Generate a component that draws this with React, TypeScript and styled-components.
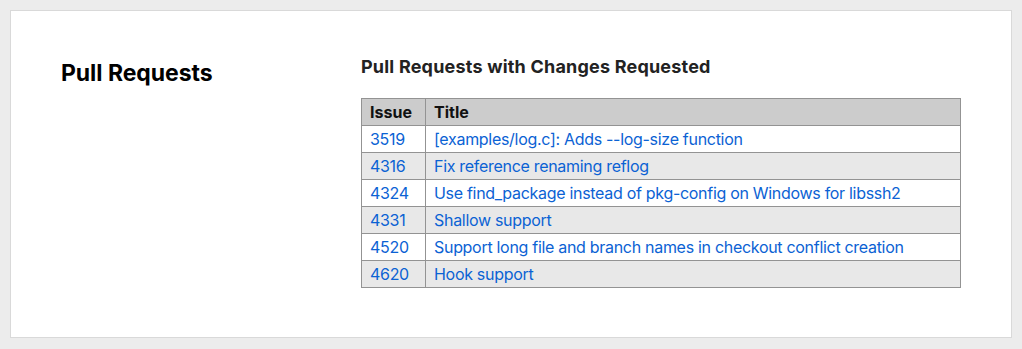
import { FC } from "react";
import styled, { createGlobalStyle } from "styled-components";

const GlobalStyle = createGlobalStyle`
  html, body {
    margin: 0;
    padding: 0;
    background: #ececec;
    font-family: Inter, "Noto Sans", sans-serif;
  }
`;

const Page = styled.div`
  padding: 10px;
  width: 1002px;
`;

const Panel = styled.section`
  display: grid;
  grid-template-columns: 300px 1fr;
  height: 326px;
  background: #fff;
  border: 1px solid #d9d9d9;
  padding-left: 50px;
`;

const SideTitle = styled.h1`
  margin: 0;
  padding-top: 48px;
  font-size: 23px;
  line-height: 28px;
  font-weight: 700;
  color: #000;
  letter-spacing: -0.05px;
`;

const Content = styled.div`
  display: flex;
  flex-direction: column;
  padding-top: 45px;
`;

const SectionTitle = styled.h2`
  margin: 0 0 20px;
  font-size: 18px;
  line-height: 22px;
  font-weight: 700;
  color: #222;
  letter-spacing: 0.2px;
`;

const Table = styled.table`
  border-collapse: collapse;
  width: 600px;
  font-size: 16px;
`;

const HeadCell = styled.th<{ $narrow?: boolean }>`
  background: #cccccc;
  border: 1px solid #939393;
  padding: 3px 8px;
  line-height: 20px;
  text-align: left;
  font-weight: 700;
  color: #111;
  width: ${(p) => (p.$narrow ? "47px" : "auto")};
`;

const Row = styled.tr<{ $shaded: boolean }>`
  background: ${(p) => (p.$shaded ? "#e8e8e8" : "#fff")};
`;

const Cell = styled.td`
  border: 1px solid #939393;
  padding: 3px 8px;
  line-height: 20px;
`;

const IssueLink = styled.a`
  color: #0b62d4;
  text-decoration: none;
  letter-spacing: -0.3px;
`;

const pulls = [
  { id: 3519, title: "[examples/log.c]: Adds --log-size function" },
  { id: 4316, title: "Fix reference renaming reflog" },
  { id: 4324, title: "Use find_package instead of pkg-config on Windows for libssh2" },
  { id: 4331, title: "Shallow support" },
  { id: 4520, title: "Support long file and branch names in checkout conflict creation" },
  { id: 4620, title: "Hook support" },
];

const App: FC = () => {
  return (
    <>
      <GlobalStyle />
      <Page>
        <Panel>
          <SideTitle>Pull Requests</SideTitle>
          <Content>
            <SectionTitle>Pull Requests with Changes Requested</SectionTitle>
            <Table>
              <thead>
                <tr>
                  <HeadCell $narrow>Issue</HeadCell>
                  <HeadCell>Title</HeadCell>
                </tr>
              </thead>
              <tbody>
                {pulls.map((pr, i) => (
                  <Row key={pr.id} $shaded={i % 2 === 1}>
                    <Cell>
                      <IssueLink href="#">{pr.id}</IssueLink>
                    </Cell>
                    <Cell>
                      <IssueLink href="#">{pr.title}</IssueLink>
                    </Cell>
                  </Row>
                ))}
              </tbody>
            </Table>
          </Content>
        </Panel>
      </Page>
    </>
  );
};

export default App;
